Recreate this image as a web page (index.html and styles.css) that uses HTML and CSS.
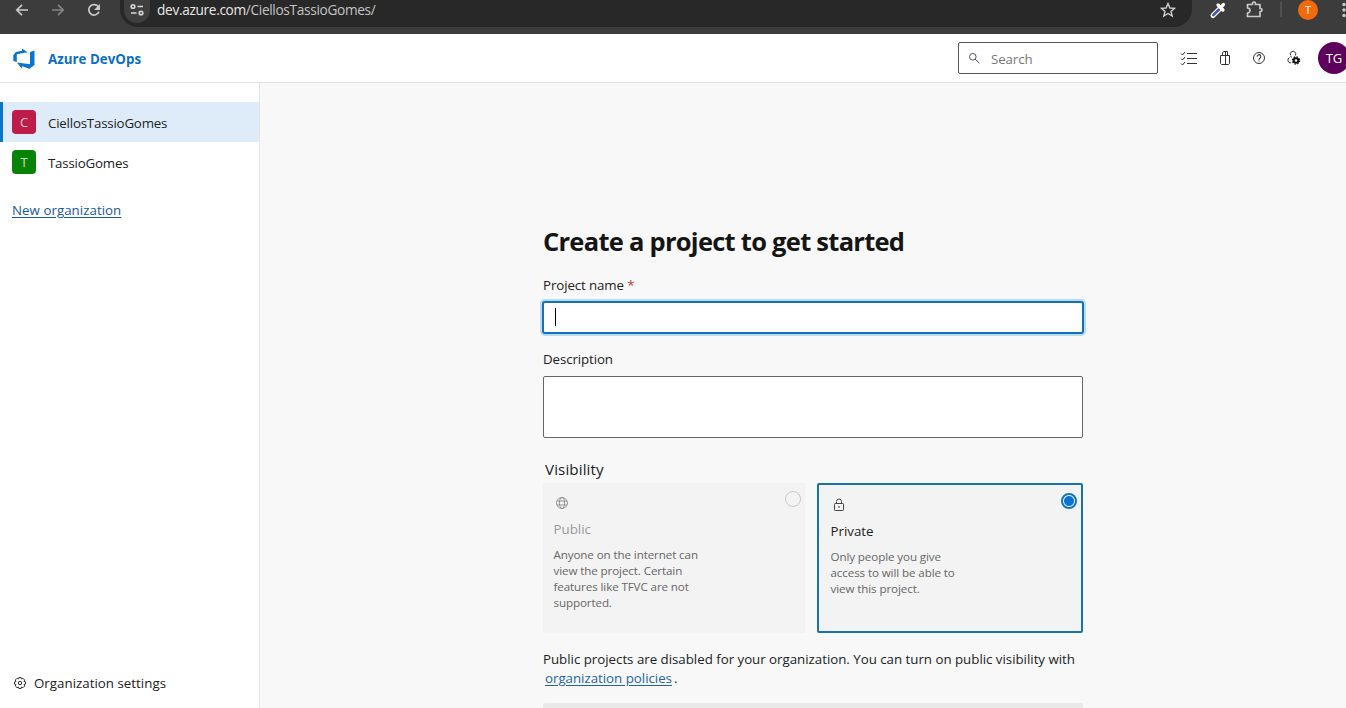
FILE: index.html
```html
<!DOCTYPE html>
<html lang="en">
<head>
<meta charset="utf-8">
<title>Azure DevOps</title>
<link rel="stylesheet" href="styles.css">
</head>
<body>
<div class="browser">
  <svg class="nav" width="120" height="27" viewBox="0 0 120 27" fill="none" stroke="#c9c9c9" stroke-width="1.7">
    <path d="M28 10H17M22 4.8L16.8 10L22 15.2"/>
    <path stroke="#858585" d="M52 10H63M58 4.8L63.200 10L58 15.200"/>
    <path d="M98.400 7A5.200 5.200 0 1 0 98.900 11.600"/><path fill="#c9c9c9" stroke="none" d="M100 4v6h-6z"/>
  </svg>
  <div class="omnibox">
    <span class="site"><svg width="14" height="14" viewBox="0 0 14 14" fill="none" stroke="#d8d8d8" stroke-width="1.600"><circle cx="3" cy="3.500" r="1.800"/><path d="M7.500 3.500H13M1 10H6.500"/><circle cx="11" cy="10" r="1.800"/></svg></span>
    <span class="url">dev.azure.com<span class="path">/CiellosTassioGomes/</span></span>
    <svg class="star" width="16" height="16" viewBox="0 0 16 16" fill="none" stroke="#cfcfcf" stroke-width="1.400"><path d="M8 1.500L9.900 6L14.600 6.300L11 9.400L12.200 14L8 11.500L3.800 14L5 9.400L1.400 6.300L6.100 6Z"/></svg>
  </div>
  <svg class="tools" width="154" height="34" viewBox="1192 0 154 34">
    <path d="M1213 15.500L1220 8.500" stroke="#fff" stroke-width="5" stroke-linecap="round"/>
    <path d="M1213.300 15.200L1219 9.500" stroke="#3f51b5" stroke-width="2.500" stroke-linecap="round"/>
    <path d="M1218 5L1223 10M1220.500 7.500L1223.500 4.500" stroke="#fff" stroke-width="3.200" stroke-linecap="round"/>
    <path fill="none" stroke="#c9c9c9" stroke-width="1.700" stroke-linejoin="round" d="M1247.500 4.500H1252.500V3.500A1.500 1.500 0 0 1 1255.500 3.500V4.500H1260V8.500H1260.500A1.500 1.500 0 0 1 1260.500 11.500H1260V16.500H1247.500V13A2.500 2.500 0 0 0 1247.500 8Z"/>
    <path stroke="#666" d="M1281 2V17"/>
    <circle cx="1308" cy="10" r="10" fill="#f26b0a"/>
    <text class="avatar-t" x="1308" y="14" text-anchor="middle">T</text>
    <g fill="#c9c9c9"><circle cx="1344" cy="4.500" r="1.700"/><circle cx="1344" cy="10" r="1.700"/><circle cx="1344" cy="15.500" r="1.700"/></g>
  </svg>
</div>
<header class="header">
  <svg class="logo" width="22" height="22" viewBox="0 0 22 22"><path fill="#0b74cc" d="M0.300 7.200L2.800 4L9 2.800V0.600L14.500 4.300L3.800 6.300V14L0.300 13ZM17 4L21.500 2.500V17L16.500 20.700L9 18.300V20.700L3.800 14.500L17 16.200Z"/></svg>
  <span class="brand">Azure DevOps</span>
  <div class="search">
    <svg width="14" height="14" viewBox="0 0 14 14" fill="none" stroke="#555" stroke-width="1"><circle cx="4.800" cy="4.800" r="3.300"/><path d="M7.200 7.200L11.500 11.300"/></svg>
    <span class="hint">Search</span>
  </div>
  <svg class="actions" width="188" height="48" viewBox="1158 34 188 48" fill="none" stroke="#333" stroke-width="1">
    <path d="M1187 53.500H1197M1187 58.500H1197M1187 63.500H1197"/>
    <path d="M1181 53.500L1182.500 55L1185 52M1181 58.500L1182.500 60L1185 57M1181 63.500L1182.500 65L1185 62"/>
    <path d="M1220.500 55.500H1229.500V63.500L1228.500 64.500H1221.500L1220.500 63.500ZM1222.500 55.500V52.500L1224 51.500H1227.500V55.500M1225.500 51.500V64.500"/>
    <circle cx="1259" cy="58" r="5.500"/>
    <path stroke-width="1.100" d="M1257.200 56.700A1.800 1.800 0 1 1 1260 58C1259.200 58.500 1259 58.800 1259 59.700M1259 60.500V61.600"/>
    <path d="M1290.700 55.300A2.700 2.700 0 1 1 1295.300 55.500M1292 57.300L1290.500 56.500M1289.500 57.500A3 3 0 0 0 1288 61Q1288.500 63 1291 63"/>
    <circle cx="1296" cy="60.500" r="2.300" stroke="#111" stroke-width="2"/><circle cx="1296" cy="60.500" r="3.600" stroke="#111" stroke-width="1.300" stroke-dasharray="1.500 1.330"/>
    <circle cx="1334" cy="58" r="16" fill="#5c005c" stroke="none"/>
    <text class="initials" x="1334" y="63" text-anchor="middle">TG</text>
  </svg>
</header>
<div class="shell">
  <nav class="sidebar">
    <div class="org selected"><span class="tile red">C</span><span class="org-name">CiellosTassioGomes</span></div>
    <div class="org"><span class="tile green">T</span><span class="org-name">TassioGomes</span></div>
    <a class="link new-org">New organization</a>
    <div class="settings">
      <svg width="14" height="14" viewBox="0 0 14 14" fill="none" stroke="#333"><path d="M5.900 1.500H8.100L8.500 3L10 2.300L11.700 4.100L10.900 5.500L12.500 5.900V8.100L11 8.500L11.700 10L10 11.700L8.500 11L8.100 12.500H5.900L5.500 11L4 11.700L2.300 10L3 8.500L1.500 8.100V5.900L3 5.500L2.300 4L4 2.300L5.500 3Z"/><circle cx="7" cy="7" r="1.700"/></svg>
      <span>Organization settings</span>
    </div>
  </nav>
  <main class="main">
    <form class="form">
      <h1 class="title">Create a project to get started</h1>
      <div class="label name-label">Project name <span class="req">*</span></div>
      <div class="input focused"><span class="caret"></span></div>
      <div class="label desc">Description</div>
      <div class="input area"></div>
      <div class="vis">Visibility</div>
      <div class="cards">
        <div class="card public">
          <svg class="icon" width="14" height="14" viewBox="0 0 14 14" fill="none" stroke="#8c8c8c" stroke-width=".9"><circle cx="7" cy="7" r="5.500"/><ellipse cx="7" cy="7" rx="2.600" ry="5.500"/><path d="M2 5H12M2 9H12"/></svg>
          <div class="name">Public</div>
          <div class="text">Anyone on the internet can<br>view the project. Certain<br>features like TFVC are not<br>supported.</div>
          <span class="radio"></span>
        </div>
        <div class="card private">
          <svg class="icon" width="14" height="14" viewBox="0 0 14 14" fill="none" stroke="#444"><rect x="2.500" y="5.500" width="9" height="7" rx=".8"/><path d="M4.500 5.500V3.500A2.500 2.500 0 0 1 9.500 3.500V5.500"/><path d="M6.300 9H7.700" stroke-width="1.400"/></svg>
          <div class="name">Private</div>
          <div class="text">Only people you give<br>access to will be able to<br>view this project.</div>
          <span class="radio on"></span>
        </div>
      </div>
      <div class="note">Public projects are disabled for your organization. You can turn on public visibility with<br><a class="link policy">organization policies</a><span class="dot">.</span></div>
      <div class="submit"></div>
    </form>
  </main>
</div>
</body>
</html>
```

FILE: styles.css
```css
* { box-sizing: border-box; }
body { margin: 0; width: 1346px; height: 708px; overflow: hidden; display: flex; flex-direction: column; background: #fff; color: #222; font: 13.3px/20px "Open Sans", "Noto Sans", sans-serif; }
svg { display: block; flex: none; }
.browser { height: 34px; flex: none; display: flex; background: #3c3c3c; }
.omnibox { width: 1072px; height: 27px; background: #282828; border-radius: 0 0 18px 18px; display: flex; align-items: flex-start; }
.site { width: 26px; height: 23px; margin-left: 4px; background: #3f3f3f; border-radius: 0 0 13px 13px; display: flex; justify-content: center; padding-top: 3px; }
.url { margin-left: 7px; line-height: 20px; color: #e8e8e8; font-size: 13.7px; letter-spacing: -.34px; }
.path { color: #c4c4c4; }
.star { margin: 2px 16px 0 auto; }
.avatar-t { font-size: 11px; fill: #fff; }
.header { height: 49px; flex: none; display: flex; border-bottom: 1px solid #e2e2e2; }
.logo { margin: 14px 0 0 13px; }
.brand { margin: 15px 0 0 13px; color: #0b6fc4; font-weight: 700; letter-spacing: .04px; }
.search { width: 200px; height: 32px; margin: 8px 0 0 auto; border: 1px solid #555; border-radius: 2px; display: flex; padding: 9px 0 0 9px; }
.hint { margin: -3px 0 0 9px; color: #777; letter-spacing: -.1px; }
.initials { font-size: 13px; fill: #fff; stroke: none; }
.shell { flex: 1; display: flex; min-height: 0; }
.sidebar { width: 260px; padding-top: 19px; border-right: 1px solid #e4e4e4; display: flex; flex-direction: column; }
.org { height: 40px; display: flex; align-items: center; padding-left: 12px; gap: 12px; }
.org-name { padding-top: 2px; letter-spacing: -.2px; }
.selected { background: #deebf8; border-left: 3px solid #0b74d0; padding-left: 9px; }
.tile { width: 24px; height: 24px; border-radius: 4px; color: #ffffffc0; text-align: center; line-height: 24px; font-size: 13px; }
.red { background: #bd1c49; }
.green { background: #078407; }
.link { color: #17599a; text-decoration: underline; text-underline-offset: 2px; }
.new-org { margin: 18px 0 0 12px; letter-spacing: .04px; }
.settings { margin-top: auto; height: 35px; display: flex; padding-left: 13px; gap: 7px; letter-spacing: .02px; }
.settings svg { margin-top: 3px; }
.main { flex: 1; background: #f8f8f8; padding: 141px 0 0 283px; }
.form { width: 540px; }
.title { margin: 0; font-size: 25.500px; line-height: 34px; padding-bottom: 2px; font-weight: 700; white-space: nowrap; color: #151515; letter-spacing: -.73px; }
.label { margin-top: 15px; height: 20px; letter-spacing: -.1px; }
.req { color: #c8382e; }
.input { height: 32px; margin-top: 7px; background: #fff; border: 1px solid #666; border-radius: 2px; }
.focused { height: 31px; border-color: #1570b8; box-shadow: 0 0 0 1px #1570b8, 0 0 0 3px #b5dbf5; padding: 5px 0 0 11px; }
.caret { display: block; width: 1px; height: 18px; background: #000; }
.desc { margin-top: 16px; }
.area { height: 62px; }
.vis { margin: 21px 0 0 2px; height: 24px; font-size: 15.200px; line-height: 20px; letter-spacing: .1px; }
.cards { display: flex; gap: 12px; }
.card { position: relative; background: #f3f3f3; height: 150px; }
.public { width: 262px; padding: 13px 0 0 10.500px; }
.private { width: 266px; padding: 13px 0 0 11.500px; border: 2px solid #1672b2; border-radius: 2px; }
.name { margin-top: 9px; line-height: 20px; }
.public .name { color: #999; }
.icon { margin-left: 1px; }
.text { margin-top: 8px; font-size: 11.600px; line-height: 16px; color: #666; white-space: nowrap; letter-spacing: -.1px; }
.radio { position: absolute; top: 8px; right: 4px; width: 16px; height: 16px; border: 1px solid #c8c8c8; border-radius: 50%; }
.on { border: 2px solid #0b74c8; background: radial-gradient(circle, #0b74d0 4.500px, #fff 5.500px); }
.note { margin-top: 17px; line-height: 19px; white-space: nowrap; letter-spacing: -.015px; }
.policy { margin-left: 2px; color: #2464a6; }
.dot { margin-left: 2px; }
.submit { margin-top: 15px; height: 32px; background: #e9e9e9; border-radius: 2px; }
```
